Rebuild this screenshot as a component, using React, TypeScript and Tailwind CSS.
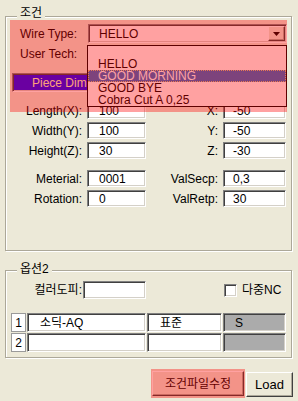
import type { ReactNode } from 'react'

// classic win32 sunken edit border
const sunken =
  'border border-t-[#808080] border-l-[#808080] border-r-white border-b-white shadow-[inset_1px_1px_0_#404040,inset_-1px_-1px_0_#D4D0C8]'
const raised =
  'border border-t-white border-l-white border-r-[#404040] border-b-[#404040] shadow-[inset_-1px_-1px_0_#ACA899]'
const group =
  'relative ml-[5px] w-[287px] border border-[#ACA899] shadow-[inset_1px_1px_0_#fff,1px_1px_0_#fff]'

function Edit({ className = '', children }: { className?: string; children?: ReactNode }) {
  return (
    <div className={`flex h-[17px] items-center bg-white leading-[12px] ${sunken} ${className}`}>
      {children}
    </div>
  )
}

function DimRow({
  label,
  value,
  rlabel,
  rvalue,
  className = '',
}: {
  label: string
  value: string
  rlabel: string
  rvalue: string
  className?: string
}) {
  return (
    <div className={`flex h-[17px] items-center ${className}`}>
      <div className="w-[76px] text-right">{label}</div>
      <Edit className="ml-[5px] w-[59px] pl-[11px]">{value}</Edit>
      <div className="w-[72px] text-right">{rlabel}</div>
      <Edit className="ml-[5px] w-[63px] pl-[9px]">{rvalue}</Edit>
    </div>
  )
}

function GridRow({ n, name, std, s }: { n: string; name: string; std: string; s: string }) {
  return (
    <div className="flex h-[19px] pl-[5px]">
      <div className="flex w-[15px] items-center justify-center border border-[#9A9A9A] bg-white">{n}</div>
      <div className={`ml-px flex w-[119px] items-center bg-white pl-[12px] ${sunken}`}>{name}</div>
      <div className={`ml-px flex w-[75px] items-center bg-white pl-[12px] ${sunken}`}>{std}</div>
      <div className={`ml-px flex w-[63px] items-center bg-[#ABABAB] pl-[11px] ${sunken}`}>{s}</div>
    </div>
  )
}

export default function App() {
  const items = ['', 'HELLO', 'GOOD MORNING', 'GOOD BYE', 'Cobra Cut A 0,25']

  return (
    <div className="relative h-[401px] w-[298px] overflow-hidden bg-[#ECE9D8] pt-[16px] text-[12px] leading-[14px] text-black [font-family:'Liberation_Sans','Noto_Sans_CJK_KR',sans-serif]">
      {/* 조건 */}
      <div className={`${group} h-[235px]`}>
        <div className="absolute left-[11px] top-[-11px] bg-[#ECE9D8] px-[3px] leading-[14px]">조건</div>

        <div className="mt-[7px] flex h-[19px] items-center">
          <div className="w-[82px] pl-[14px]">Wire Type:</div>
          <div className={`relative flex h-[19px] w-[199px] items-center bg-white pl-[10px] ${sunken}`}>
            HELLO
            <div className={`absolute right-[1px] top-[1px] flex h-[15px] w-[17px] items-center justify-center bg-[#ECE9D8] ${raised}`}>
              <svg width="7" height="4" viewBox="0 0 7 4">
                <path d="M0 0h7L3.5 4z" fill="#000" />
              </svg>
            </div>
          </div>
        </div>

        <div className="mt-[2px] flex h-[17px] items-center">
          <div className="w-[82px] pl-[14px]">User Tech:</div>
          <Edit className="w-[199px]" />
        </div>

        <div className={`ml-[6px] mt-[11px] flex h-[19px] w-[275px] items-center bg-[#1400FF] pl-[19px] text-[#FFFFC0] ${sunken}`}>
          Piece Dimension
        </div>

        <DimRow className="mt-[10px]" label="Length(X):" value="100" rlabel="X:" rvalue="-50" />
        <DimRow className="mt-[3px]" label="Width(Y):" value="100" rlabel="Y:" rvalue="-50" />
        <DimRow className="mt-[3px]" label="Height(Z):" value="30" rlabel="Z:" rvalue="-30" />
        <DimRow className="mt-[11px]" label="Meterial:" value="0001" rlabel="ValSecp:" rvalue="0,3" />
        <DimRow className="mt-[3px]" label="Rotation:" value="0" rlabel="ValRetp:" rvalue="30" />
      </div>

      {/* 옵션2 */}
      <div className={`${group} mt-[19px] h-[88px]`}>
        <div className="absolute left-[11px] top-[-9px] bg-[#ECE9D8] px-[3px] leading-[14px]">옵션2</div>

        <div className="mt-[10px] flex h-[18px] items-center">
          <div className="w-[76px] text-right">컬러도피:</div>
          <Edit className="ml-px h-[18px] w-[63px]" />
          <div className={`ml-[78px] h-[13px] w-[13px] bg-white ${sunken}`} />
          <div className="ml-[5px]">다중NC</div>
        </div>

        <div className="mt-[14px]">
          <GridRow n="1" name="소딕-AQ" std="표준" s="S" />
        </div>
        <div className="mt-px">
          <GridRow n="2" name="" std="" s="" />
        </div>
      </div>

      <div className="mt-[13px] flex items-start justify-end gap-[2px] pr-[5px]">
        <button className={`flex h-[25px] w-[92px] items-center justify-center bg-[#ECE9D8] ${raised}`}>
          조건파일수정
        </button>
        <button className={`mt-px flex h-[25px] w-[47px] items-center justify-center bg-[#ECE9D8] text-[13px] ${raised}`}>
          Load
        </button>
      </div>

      {/* open dropdown list of Wire Type */}
      <div className="absolute left-[87px] top-[45px] h-[62px] w-[200px] border border-black bg-white">
        {items.map((t, i) => (
          <div
            key={i}
            className={
              i === 2
                ? 'h-[12px] border border-dotted border-[#E0C080] bg-[#316AC5] pl-[9px] leading-[10px] text-white'
                : 'h-[12px] pl-[10px] leading-[12px]'
            }
          >
            {t}
          </div>
        ))}
      </div>

      {/* highlight overlays */}
      <div className="absolute left-[10px] top-[20px] h-[92px] w-[277px] bg-[rgba(255,0,0,0.37)]" />
      <div className="absolute left-[151px] top-[369px] h-[29px] w-[94px] bg-[rgba(255,0,0,0.37)]" />
    </div>
  )
}
